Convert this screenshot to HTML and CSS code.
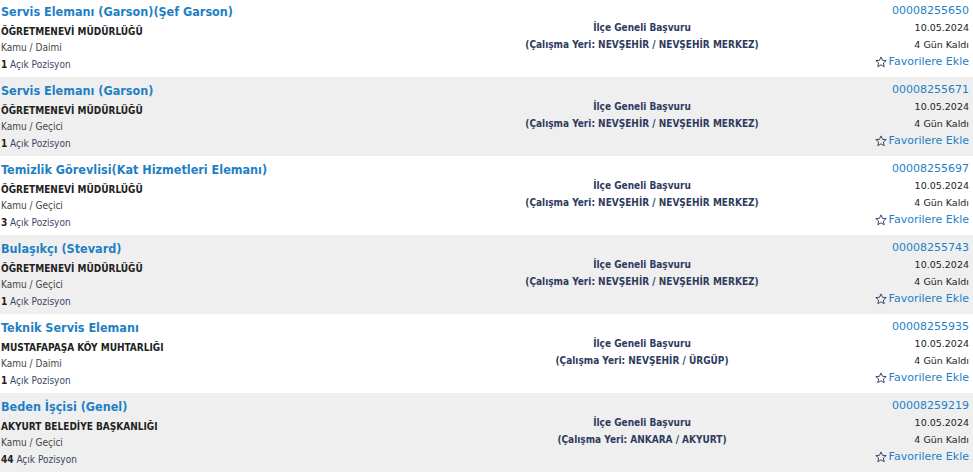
FILE: index.html
```html
<!DOCTYPE html>
<html lang="tr">
<head>
<meta charset="utf-8">
<link rel="stylesheet" href="styles.css">
</head>
<body>
<div class="list">
  <div class="row">
    <div class="left">
      <a class="title">Servis Elemanı (Garson)(Şef Garson)</a>
      <div class="org">ÖĞRETMENEVİ MÜDÜRLÜĞÜ</div>
      <div class="type">Kamu / Daimi</div>
      <div class="pos"><b>1</b> Açık Pozisyon</div>
    </div>
    <div class="mid">
      <div>İlçe Geneli Başvuru</div>
      <div>(Çalışma Yeri: NEVŞEHİR / NEVŞEHİR MERKEZ)</div>
    </div>
    <div class="right">
      <a class="num">00008255650</a>
      <div class="date">10.05.2024</div>
      <div class="days">4 Gün Kaldı</div>
      <a class="fav"><svg class="star" viewBox="0 0 12 12"><path d="M6 0.9 L7.5 4.3 L11.2 4.6 L8.4 7 L9.2 10.7 L6 8.8 L2.8 10.7 L3.6 7 L0.8 4.6 L4.5 4.3 Z"/></svg>Favorilere Ekle</a>
    </div>
  </div>
  <div class="row alt">
    <div class="left">
      <a class="title">Servis Elemanı (Garson)</a>
      <div class="org">ÖĞRETMENEVİ MÜDÜRLÜĞÜ</div>
      <div class="type">Kamu / Geçici</div>
      <div class="pos"><b>1</b> Açık Pozisyon</div>
    </div>
    <div class="mid">
      <div>İlçe Geneli Başvuru</div>
      <div>(Çalışma Yeri: NEVŞEHİR / NEVŞEHİR MERKEZ)</div>
    </div>
    <div class="right">
      <a class="num">00008255671</a>
      <div class="date">10.05.2024</div>
      <div class="days">4 Gün Kaldı</div>
      <a class="fav"><svg class="star" viewBox="0 0 12 12"><path d="M6 0.9 L7.5 4.3 L11.2 4.6 L8.4 7 L9.2 10.7 L6 8.8 L2.8 10.7 L3.6 7 L0.8 4.6 L4.5 4.3 Z"/></svg>Favorilere Ekle</a>
    </div>
  </div>
  <div class="row">
    <div class="left">
      <a class="title">Temizlik Görevlisi(Kat Hizmetleri Elemanı)</a>
      <div class="org">ÖĞRETMENEVİ MÜDÜRLÜĞÜ</div>
      <div class="type">Kamu / Geçici</div>
      <div class="pos"><b>3</b> Açık Pozisyon</div>
    </div>
    <div class="mid">
      <div>İlçe Geneli Başvuru</div>
      <div>(Çalışma Yeri: NEVŞEHİR / NEVŞEHİR MERKEZ)</div>
    </div>
    <div class="right">
      <a class="num">00008255697</a>
      <div class="date">10.05.2024</div>
      <div class="days">4 Gün Kaldı</div>
      <a class="fav"><svg class="star" viewBox="0 0 12 12"><path d="M6 0.9 L7.5 4.3 L11.2 4.6 L8.4 7 L9.2 10.7 L6 8.8 L2.8 10.7 L3.6 7 L0.8 4.6 L4.5 4.3 Z"/></svg>Favorilere Ekle</a>
    </div>
  </div>
  <div class="row alt">
    <div class="left">
      <a class="title">Bulaşıkçı (Stevard)</a>
      <div class="org">ÖĞRETMENEVİ MÜDÜRLÜĞÜ</div>
      <div class="type">Kamu / Geçici</div>
      <div class="pos"><b>1</b> Açık Pozisyon</div>
    </div>
    <div class="mid">
      <div>İlçe Geneli Başvuru</div>
      <div>(Çalışma Yeri: NEVŞEHİR / NEVŞEHİR MERKEZ)</div>
    </div>
    <div class="right">
      <a class="num">00008255743</a>
      <div class="date">10.05.2024</div>
      <div class="days">4 Gün Kaldı</div>
      <a class="fav"><svg class="star" viewBox="0 0 12 12"><path d="M6 0.9 L7.5 4.3 L11.2 4.6 L8.4 7 L9.2 10.7 L6 8.8 L2.8 10.7 L3.6 7 L0.8 4.6 L4.5 4.3 Z"/></svg>Favorilere Ekle</a>
    </div>
  </div>
  <div class="row">
    <div class="left">
      <a class="title">Teknik Servis Elemanı</a>
      <div class="org">MUSTAFAPAŞA KÖY MUHTARLIĞI</div>
      <div class="type">Kamu / Daimi</div>
      <div class="pos"><b>1</b> Açık Pozisyon</div>
    </div>
    <div class="mid">
      <div>İlçe Geneli Başvuru</div>
      <div>(Çalışma Yeri: NEVŞEHİR / ÜRGÜP)</div>
    </div>
    <div class="right">
      <a class="num">00008255935</a>
      <div class="date">10.05.2024</div>
      <div class="days">4 Gün Kaldı</div>
      <a class="fav"><svg class="star" viewBox="0 0 12 12"><path d="M6 0.9 L7.5 4.3 L11.2 4.6 L8.4 7 L9.2 10.7 L6 8.8 L2.8 10.7 L3.6 7 L0.8 4.6 L4.5 4.3 Z"/></svg>Favorilere Ekle</a>
    </div>
  </div>
  <div class="row alt">
    <div class="left">
      <a class="title">Beden İşçisi (Genel)</a>
      <div class="org">AKYURT BELEDİYE BAŞKANLIĞI</div>
      <div class="type">Kamu / Geçici</div>
      <div class="pos"><b>44</b> Açık Pozisyon</div>
    </div>
    <div class="mid">
      <div>İlçe Geneli Başvuru</div>
      <div>(Çalışma Yeri: ANKARA / AKYURT)</div>
    </div>
    <div class="right">
      <a class="num">00008259219</a>
      <div class="date">10.05.2024</div>
      <div class="days">4 Gün Kaldı</div>
      <a class="fav"><svg class="star" viewBox="0 0 12 12"><path d="M6 0.9 L7.5 4.3 L11.2 4.6 L8.4 7 L9.2 10.7 L6 8.8 L2.8 10.7 L3.6 7 L0.8 4.6 L4.5 4.3 Z"/></svg>Favorilere Ekle</a>
    </div>
  </div>
</div>
</body>
</html>
```
FILE: styles.css
```css
html, body {
  margin: 0;
  padding: 0;
  background: #ffffff;
}
body {
  font-family: "DejaVu Sans Condensed", "DejaVu Sans", Verdana, sans-serif;
  font-size: 10px;
  color: #222222;
}
.list {
  display: flex;
  flex-direction: column;
  margin-top: -2px;
}
.row {
  display: grid;
  grid-template-columns: 1fr 454px 100px;
  height: 79px;
  padding: 0 4px 0 1px;
  box-sizing: border-box;
}
.row.alt {
  background: #efefef;
}
.left {
  padding-top: 5px;
  display: flex;
  flex-direction: column;
}
.title {
  font-size: 12.5px;
  font-weight: bold;
  color: #1f7fc4;
  line-height: 18px;
  margin-bottom: 2px;
  white-space: nowrap;
}
.org {
  font-weight: bold;
  line-height: 17px;
  color: #222222;
}
.type {
  line-height: 16px;
  color: #444444;
}
.pos {
  line-height: 17px;
  color: #3a4668;
}
.pos b {
  color: #222222;
}
.mid {
  padding-top: 21px;
  text-align: center;
  font-weight: bold;
  color: #2e3b5e;
  line-height: 17px;
}
.right {
  padding-top: 5px;
  display: flex;
  flex-direction: column;
  align-items: flex-end;
  text-align: right;
  font-family: "DejaVu Sans", Verdana, sans-serif;
}
.num {
  font-size: 11px;
  line-height: 16px;
  color: #1f7fc4;
}
.date, .days {
  font-size: 9.5px;
  line-height: 17px;
  color: #222222;
}
.fav {
  font-size: 11px;
  line-height: 17px;
  color: #1f7fc4;
  display: flex;
  align-items: center;
  white-space: nowrap;
}
.star {
  width: 12px;
  height: 12px;
  margin-right: 2px;
  fill: none;
  stroke: #3a4668;
  stroke-width: 1;
  stroke-linejoin: round;
}
```
